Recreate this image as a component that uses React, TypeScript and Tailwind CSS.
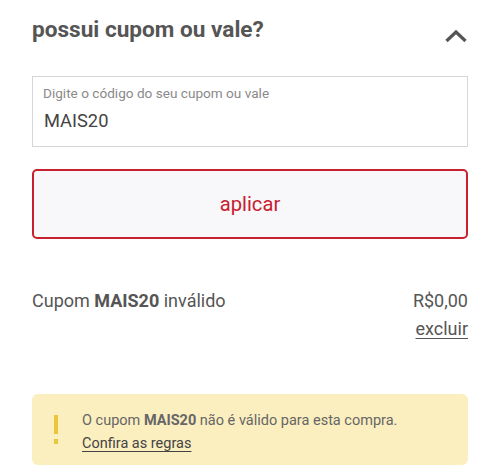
export default function App() {
  return (
    <div className="min-h-[475px] w-[500px] bg-white px-8 pt-[14px] font-['Roboto',sans-serif] text-[#555]">
      {/* header */}
      <div className="flex items-center justify-between">
        <h2 className="text-[22.6px] font-bold leading-[32px] text-[#555]">possui cupom ou vale?</h2>
        <svg className="mt-[12px] h-[14px] w-[24px]" viewBox="0 0 24 14" fill="none">
          <path d="M2.5 12L12 3L21.5 12" stroke="#555" strokeWidth="3.2" />
        </svg>
      </div>

      {/* input */}
      <div className="mt-[30px] flex h-[71px] flex-col border border-[#d6d6d6] px-[10px] pt-[7px]">
        <label className="text-[13.6px] leading-[18px] text-[#8a8a8a]">Digite o código do seu cupom ou vale</label>
        <div className="mt-[8px] pl-[1px] text-[18.3px] leading-[22px] text-[#444]">MAIS20</div>
      </div>

      {/* button */}
      <button className="mt-[22px] flex h-[70px] w-full items-center justify-center rounded-[5px] border-2 border-[#c8202f] bg-[#f8f8fa] text-[20.2px] text-[#c8202f]">
        aplicar
      </button>

      {/* coupon line */}
      <div className="mt-[50px] flex items-start justify-between text-[18px] leading-[24px] text-[#555]">
        <span>
          Cupom <b className="font-bold">MAIS20</b> inválido
        </span>
        <div className="flex flex-col items-end">
          <span>R$0,00</span>
          <a className="mt-[4px] underline underline-offset-[3px]">excluir</a>
        </div>
      </div>

      {/* warning */}
      <div className="mt-[53px] flex h-[71px] gap-[24px] rounded-[6px] bg-[#fbeebf] pl-[22px] pt-[15px]">
        <div className="mt-[6px] flex flex-col items-center">
          <div className="h-[19px] w-[4px] bg-[#e9c63b]" />
          <div className="mt-[5px] h-[5px] w-[4px] bg-[#e9c63b]" />
        </div>
        <div className="text-[14.5px] leading-[23px] text-[#666]">
          <p>
            O cupom <b className="font-bold">MAIS20</b> não é válido para esta compra.
          </p>
          <a className="text-[#444] underline underline-offset-[3px]">Confira as regras</a>
        </div>
      </div>
    </div>
  );
}
